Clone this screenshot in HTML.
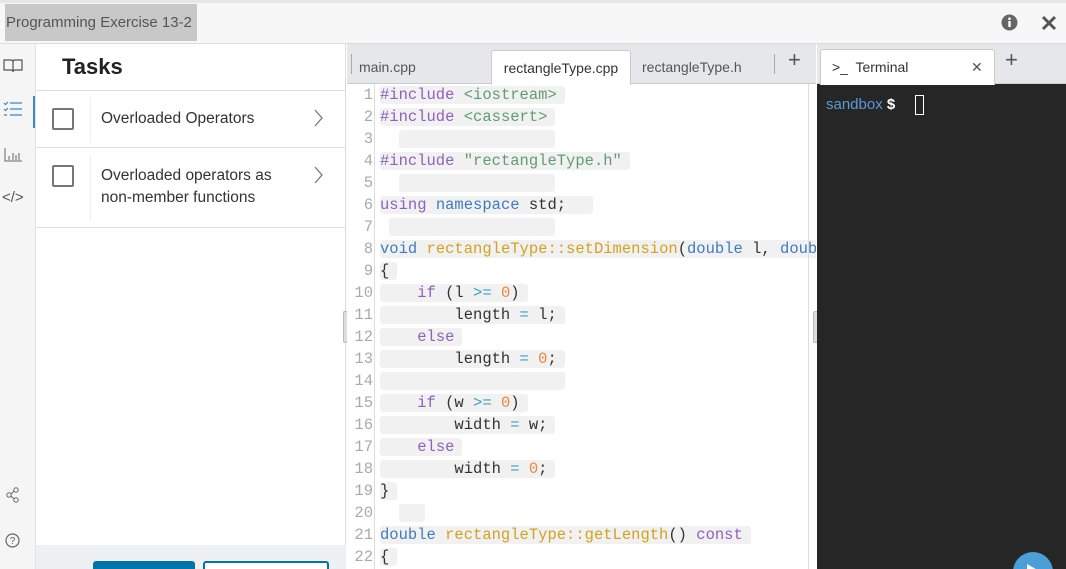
<!DOCTYPE html>
<html style="width:1066px;height:569px;overflow:hidden"><head><meta charset="utf-8"><style>
*{box-sizing:border-box;margin:0;padding:0}
body{width:1066px;height:569px;overflow:hidden;background:#fff;font-family:"Liberation Sans",sans-serif;position:relative}
.top{position:absolute;left:0;top:0;width:1066px;height:44px;background:#f7f7f7;border-top:3px solid #e6e6e6;border-bottom:1px solid #ddd}
.title{position:absolute;left:5px;top:1px;width:192px;height:37px;background:#c8c8c8;color:#555;font-size:15px;line-height:37px;padding-left:1px}
.rail{position:absolute;left:0;top:44px;width:36px;height:525px;background:#f5f5f5;border-right:1px solid #e2e2e2}
.tasks{position:absolute;left:36px;top:44px;width:310px;height:525px;background:#fff;border-right:1px solid #ddd}
.tasks h1{font-size:22px;font-weight:bold;color:#222;position:absolute;left:26px;top:10px}
.row{position:absolute;left:0;width:310px;border-top:1px solid #ddd}
.cb{position:absolute;left:16px;width:22px;height:22px;border:2px solid #777;border-radius:2px}
.sep{position:absolute;left:54px;width:1px;background:#eee}
.rt{position:absolute;left:65px;font-size:15.5px;color:#333;line-height:22px}
.foot{position:absolute;left:0;top:501px;width:310px;height:24px;background:#eef1f4}
.editor{position:absolute;left:347px;top:44px;width:469px;height:525px;background:#fff;overflow:hidden}
.tabs{position:absolute;left:0;top:0;width:469px;height:40px;background:#e5e7ea;border-bottom:1px solid #ccc}
.tab{position:absolute;top:6px;height:34px;font-size:14px;color:#555;line-height:34px}
.gut{position:absolute;left:0;top:40px;width:28px;height:485px;background:#fff;border-right:1px solid #ddd}
.code{position:absolute;left:0;top:40px;font-family:"Liberation Mono",monospace;font-size:15.5px;color:#333}
.ln{height:22px;line-height:22px;white-space:pre;position:relative}
.ln .n{display:inline-block;width:26px;text-align:right;color:#aaa;margin-right:7px}
.ln .t{background:#f1f1f1;padding-right:8px;border-radius:3px}
.k{color:#9160bd}.b{color:#3e7cc0}.g{color:#d3a21e}.s{color:#5f9d72}.o{color:#f0843a}.c{color:#3aa0c4}
.term{position:absolute;left:817px;top:44px;width:249px;height:525px;background:#262626;overflow:hidden}
.ttabs{position:absolute;left:0;top:0;width:249px;height:40px;background:#e5e7ea;border-bottom:1px solid #ccc}
</style></head><body>
<div class="top"><div class="title">Programming Exercise 13-2</div>
<svg style="position:absolute;left:1001px;top:11px" width="17" height="17"><circle cx="8.5" cy="8.5" r="8" fill="#666"/><rect x="7.3" y="7" width="2.4" height="6" fill="#fff"/><circle cx="8.5" cy="4.7" r="1.3" fill="#fff"/></svg>
<svg style="position:absolute;left:1041px;top:12px" width="16" height="16"><path d="M2 2L14 14M14 2L2 14" stroke="#555" stroke-width="3"/></svg>
</div>
<div class="rail">
<svg style="position:absolute;left:3px;top:14px" width="20" height="15"><path d="M1 2h7q2 0 2 2v10q0-2-2-2H1zM19 2h-7q-2 0-2 2v10q0-2 2-2h7z" fill="none" stroke="#555" stroke-width="1.2"/></svg>
<div style="position:absolute;left:33px;top:52px;width:2px;height:32px;background:#3a87c8"></div>
<svg style="position:absolute;left:3px;top:57px" width="20" height="16"><path d="M7 2h12M7 8h12M7 14h12M1 2l1.5 1.5L5 1M1 8l1.5 1.5L5 7M1 14h3" fill="none" stroke="#3a87c8" stroke-width="1.2"/></svg>
<svg style="position:absolute;left:4px;top:104px" width="18" height="14"><path d="M1 0v13h17M5 12v-4M9 12v-7M12 12v-5M15 12v-7" fill="none" stroke="#666" stroke-width="1"/></svg>
<div style="position:absolute;left:2px;top:145px;font-size:15px;color:#555">&lt;/&gt;</div>
<svg style="position:absolute;left:6px;top:443px" width="14" height="16"><circle cx="10" cy="3" r="2.2" fill="none" stroke="#666"/><circle cx="3" cy="8" r="2.2" fill="none" stroke="#666"/><circle cx="10" cy="13" r="2.2" fill="none" stroke="#666"/><path d="M5 7l3-3M5 9l3 3" stroke="#666"/></svg>
<svg style="position:absolute;left:5px;top:489px" width="15" height="15"><circle cx="7.5" cy="7.5" r="6.5" fill="none" stroke="#666" stroke-width="1.2"/><text x="7.5" y="11" font-size="10" text-anchor="middle" fill="#666" font-family="Liberation Sans">?</text></svg>
</div>
<div class="tasks">
<h1>Tasks</h1>
<div class="row" style="top:46px;height:57px"><div class="cb" style="top:17px"></div><div class="sep" style="top:7px;height:44px"></div><div class="rt" style="top:17px">Overloaded Operators</div>
<svg style="position:absolute;left:278px;top:18px" width="10" height="18"><path d="M1 1l7 8-7 8" fill="none" stroke="#777" stroke-width="1.3"/></svg></div>
<div class="row" style="top:103px;height:81px;border-bottom:1px solid #ddd"><div class="cb" style="top:17px"></div><div class="sep" style="top:7px;height:66px"></div><div class="rt" style="top:17px">Overloaded operators as<br>non-member functions</div>
<svg style="position:absolute;left:278px;top:18px" width="10" height="18"><path d="M1 1l7 8-7 8" fill="none" stroke="#777" stroke-width="1.3"/></svg></div>
<div class="foot"></div>
<div style="position:absolute;left:57px;top:517px;width:102px;height:10px;background:#0073aa;border-radius:3px 3px 0 0"></div>
<div style="position:absolute;left:167px;top:517px;width:126px;height:10px;border:2px solid #0073aa;border-bottom:none;border-radius:3px 3px 0 0;background:#fff"></div>
</div>
<div style="position:absolute;left:343px;top:311px;width:5px;height:32px;background:#ddd;border:1px solid #bbb;border-radius:2px"></div>
<div class="editor">
<div class="tabs">
<div style="position:absolute;left:4px;top:10px;width:1px;height:20px;background:#aaa"></div>
<div class="tab" style="left:12px">main.cpp</div>
<div class="tab" style="left:144px;width:140px;background:#fff;border:1px solid #ccc;border-bottom:none;text-align:center;color:#333;border-radius:3px 3px 0 0;height:35px">rectangleType.cpp</div>
<div class="tab" style="left:295px">rectangleType.h</div>
<div style="position:absolute;left:427px;top:10px;width:1px;height:20px;background:#aaa"></div>
<div style="position:absolute;left:441px;top:3px;font-size:22px;color:#555">+</div>
</div>
<div class="gut"></div>
<div class="code">
<div class="ln"><span class="n">1</span><span class="t"><span class="k">#include</span> <span class="s">&lt;iostream&gt;</span></span></div>
<div class="ln"><span class="n">2</span><span class="t"><span class="k">#include</span> <span class="s">&lt;cassert&gt;</span></span></div>
<div class="ln"><span class="n">3</span>  <span class="t">                </span></div>
<div class="ln"><span class="n">4</span><span class="t"><span class="k">#include</span> <span class="s">"rectangleType.h"</span></span></div>
<div class="ln"><span class="n">5</span>  <span class="t">                </span></div>
<div class="ln"><span class="n">6</span><span class="t"><span class="k">using</span> <span class="b">namespace</span> std;  </span></div>
<div class="ln"><span class="n">7</span> <span class="t">                 </span></div>
<div class="ln"><span class="n">8</span><span class="t"><span class="b">void</span> <span class="g">rectangleType::setDimension</span>(<span class="b">double</span> l, <span class="b">double</span> w)</span></div>
<div class="ln"><span class="n">9</span><span class="t">{</span></div>
<div class="ln"><span class="n">10</span><span class="t">    <span class="k">if</span> (l <span class="c">&gt;=</span> <span class="o">0</span>)</span></div>
<div class="ln"><span class="n">11</span><span class="t">        length <span class="c">=</span> l;</span></div>
<div class="ln"><span class="n">12</span><span class="t">    <span class="k">else</span></span></div>
<div class="ln"><span class="n">13</span><span class="t">        length <span class="c">=</span> <span class="o">0</span>;</span></div>
<div class="ln"><span class="n">14</span><span class="t">                   </span></div>
<div class="ln"><span class="n">15</span><span class="t">    <span class="k">if</span> (w <span class="c">&gt;=</span> <span class="o">0</span>)</span></div>
<div class="ln"><span class="n">16</span><span class="t">        width <span class="c">=</span> w;</span></div>
<div class="ln"><span class="n">17</span><span class="t">    <span class="k">else</span></span></div>
<div class="ln"><span class="n">18</span><span class="t">        width <span class="c">=</span> <span class="o">0</span>;</span></div>
<div class="ln"><span class="n">19</span><span class="t">}</span></div>
<div class="ln"><span class="n">20</span>  <span class="t">  </span></div>
<div class="ln"><span class="n">21</span><span class="t"><span class="b">double</span> <span class="g">rectangleType::getLength</span>() <span class="k">const</span></span></div>
<div class="ln"><span class="n">22</span><span class="t">{</span></div>
</div>
</div>
<div style="position:absolute;left:808px;top:84px;width:1px;height:485px;background:#ddd"></div>
<div style="position:absolute;left:813px;top:311px;width:6px;height:32px;background:#ddd;border:1px solid #bbb;border-radius:2px"></div>
<div class="term">
<div class="ttabs">
<div style="position:absolute;left:3px;top:5px;width:175px;height:36px;background:#fff;border:1px solid #ccc;border-bottom:none;border-radius:3px 3px 0 0;font-size:14px;color:#333;line-height:34px;padding-left:11px">&gt;_&nbsp; Terminal<span style="position:absolute;left:150px;color:#555">✕</span></div>
<div style="position:absolute;left:188px;top:3px;font-size:22px;color:#555">+</div>
</div>
<div style="position:absolute;left:9px;top:52px;font-family:'Liberation Sans',sans-serif;font-size:15px;color:#5a9ad8">sandbox <b style="color:#fff">$</b></div>
<div style="position:absolute;left:98px;top:51px;width:9px;height:20px;border:1px solid #fff"></div>
<div style="position:absolute;left:196px;top:508px;width:40px;height:40px;border-radius:50%;background:#4a9fd8"></div>
<svg style="position:absolute;left:210px;top:520px" width="14" height="14"><path d="M0 0L14 8L0 16z" fill="#fff"/></svg>
</div>
</body></html>
